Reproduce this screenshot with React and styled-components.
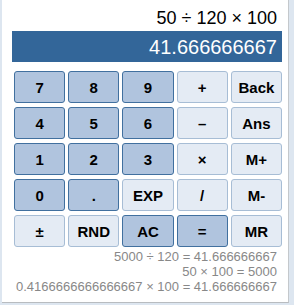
import React from "react";
import styled, { createGlobalStyle } from "styled-components";

const GlobalStyle = createGlobalStyle`
  html, body {
    margin: 0;
    padding: 0;
    background: #dde6f0;
    font-family: "Liberation Sans", Arial, sans-serif;
  }
`;

const keys = [
  ["7", "dark"], ["8", "dark"], ["9", "dark"], ["+", "light"], ["Back", "light"],
  ["4", "dark"], ["5", "dark"], ["6", "dark"], ["–", "light"], ["Ans", "light"],
  ["1", "dark"], ["2", "dark"], ["3", "dark"], ["×", "light"], ["M+", "light"],
  ["0", "dark"], [".", "dark"], ["EXP", "light"], ["/", "light"], ["M-", "light"],
  ["±", "light"], ["RND", "light"], ["AC", "dark"], ["=", "dark"], ["MR", "light"],
];

const history = [
  "5000 ÷ 120 = 41.666666667",
  "50 × 100 = 5000",
  "0.4166666666666667 × 100 = 41.666666667",
];

export default function App() {
  return (
    <>
      <GlobalStyle />
      <Panel>
        <Expression>50 ÷ 120 × 100</Expression>
        <Result>41.666666667</Result>
        <Keypad>
          {keys.map(([label, tone]) => (
            <Key key={label} $dark={tone === "dark"}>
              {label}
            </Key>
          ))}
        </Keypad>
        <History>
          {history.map((line) => (
            <div key={line}>{line}</div>
          ))}
        </History>
      </Panel>
    </>
  );
}

const Panel = styled.div`
  margin-left: 2px;
  width: 287px;
  height: 303px;
  box-sizing: border-box;
  padding: 0 6px 0 10px;
  background: #fff;
  border-right: 1px solid #c4c8cc;
  border-bottom: 1px solid #b8bcc0;
`;

const Expression = styled.div`
  height: 31px;
  box-sizing: border-box;
  padding: 8px 5px 0 0;
  text-align: right;
  font-size: 18px;
  line-height: 21px;
  color: #000;
`;

const Result = styled.div`
  height: 31px;
  box-sizing: border-box;
  padding: 4px 5px 0 0;
  background: #336699;
  color: #fff;
  text-align: right;
  font-size: 20px;
  line-height: 24px;
`;

const Keypad = styled.div`
  display: grid;
  grid-template-columns: repeat(5, 1fr);
  grid-auto-rows: 32px;
  column-gap: 3px;
  row-gap: 4px;
  margin: 9px 0 0 2px;
`;

const Key = styled.button`
  box-sizing: border-box;
  margin: 0;
  padding: 0;
  border-radius: 3px;
  border: 1px solid ${(p) => (p.$dark ? "#41709f" : "#a7bdd5")};
  background: ${(p) => (p.$dark ? "#b0c4de" : "#e4ebf4")};
  color: #000;
  font-family: "Liberation Sans", Arial, sans-serif;
  font-weight: bold;
  font-size: 15px;
  cursor: pointer;
`;

const History = styled.div`
  margin-top: 2px;
  padding-right: 5px;
  text-align: right;
  color: #888;
  font-size: 13px;
  line-height: 15px;
  white-space: nowrap;
`;
